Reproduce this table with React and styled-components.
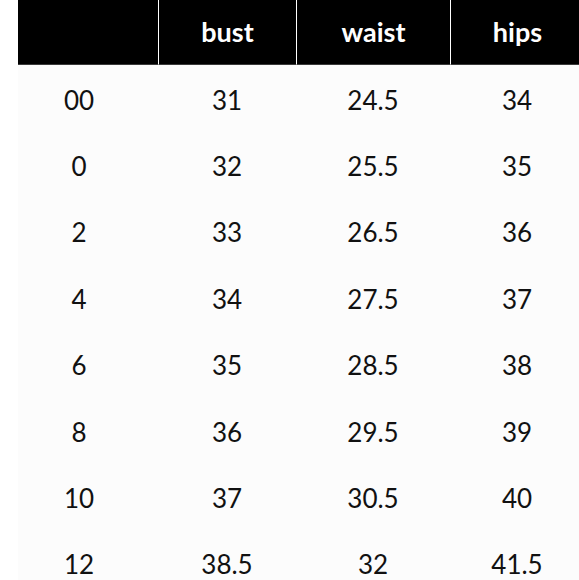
import React from 'react'
import styled, { createGlobalStyle } from 'styled-components'

const GlobalStyle = createGlobalStyle`
    html, body {
        margin: 0;
        padding: 0;
        background: #ffffff;
        overflow: hidden;
    }
    * {
        box-sizing: border-box;
    }
`;

const COLS = '158px 138px 154px 134px';

const Chart = styled.div`
    width: 584px;
    font-family: Lato, "Liberation Sans", sans-serif;
    color: #111;
`;

const HeadRow = styled.div`
    display: grid;
    grid-template-columns: ${COLS};
    height: 65px;
`;

const HeadCell = styled.div`
    background: #000;
    color: #fff;
    font-weight: 700;
    font-size: 27px;
    display: flex;
    align-items: center;
    justify-content: center;
    padding-bottom: 2px;
    border-bottom: 1px solid #3a3a3a;
    border-left: ${p => (p.$first ? 'none' : '1.5px solid #fff')};
    margin-left: ${p => (p.$first ? '18px' : '0')};
`;

const Body = styled.div`
    background: linear-gradient(to right, #fff 18px, #fcfcfc 18px);
`;

const Row = styled.div`
    display: grid;
    grid-template-columns: ${COLS};
    height: 66.4px;
`;

const Cell = styled.div`
    display: flex;
    align-items: center;
    justify-content: center;
    padding-top: 3px;
    font-size: 26px;
    font-weight: 400;
`;

const heads = ['', 'bust', 'waist', 'hips'];

const rows = [
    ['00', '31', '24.5', '34'],
    ['0', '32', '25.5', '35'],
    ['2', '33', '26.5', '36'],
    ['4', '34', '27.5', '37'],
    ['6', '35', '28.5', '38'],
    ['8', '36', '29.5', '39'],
    ['10', '37', '30.5', '40'],
    ['12', '38.5', '32', '41.5'],
];

const App = () => {
    return (
        <>
            <GlobalStyle />
            <Chart>
                <HeadRow>
                    {heads.map((h, i) => (
                        <HeadCell key={i} $first={i === 0}>{h}</HeadCell>
                    ))}
                </HeadRow>
                <Body>
                    {rows.map((r, i) => (
                        <Row key={i}>
                            {r.map((v, j) => (
                                <Cell key={j}>{v}</Cell>
                            ))}
                        </Row>
                    ))}
                </Body>
            </Chart>
        </>
    )
}

export default App
